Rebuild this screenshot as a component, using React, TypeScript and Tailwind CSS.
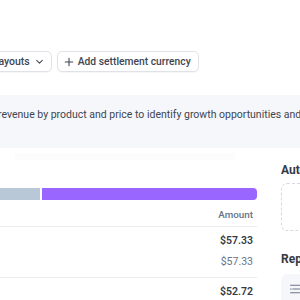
import React from 'react';

const Chevron = () => (
  <svg viewBox="0 0 16 16" className="w-[9px] h-[9px]" fill="none" stroke="currentColor" strokeWidth={1.8} strokeLinecap="round" strokeLinejoin="round">
    <path d="M3 6l5 5 5-5" />
  </svg>
);

const Plus = () => (
  <svg viewBox="0 0 16 16" className="w-[10px] h-[10px]" fill="none" stroke="currentColor" strokeWidth={1.7} strokeLinecap="round">
    <path d="M8 2v12M2 8h12" />
  </svg>
);

const ReportIcon = () => (
  <svg viewBox="0 0 16 16" className="w-[12px] h-[12px] text-[#6c7688]" fill="none" stroke="currentColor" strokeWidth={1.4} strokeLinecap="round">
    <path d="M2 3h12M5 8h9M2 13h12M2 8h1" />
  </svg>
);

export default function App() {
  return (
    <div className="w-[300px] h-[300px] overflow-hidden bg-white text-[#414552] font-['Roboto',sans-serif]">
      <div className="pt-[51px] flex gap-[5px] -ml-[44px]">
        <button className="h-[21px] pl-[10px] pr-[7px] flex items-center gap-[5px] rounded-[5px] border border-[#dfe3e8] shadow-[0_1px_1px_rgba(0,0,0,0.04)] text-[10.5px] font-medium whitespace-nowrap">
          <span>View payouts</span>
          <Chevron />
        </button>
        <button className="h-[21px] pl-[6px] pr-[7px] flex items-center gap-[4px] rounded-[5px] border border-[#dfe3e8] shadow-[0_1px_1px_rgba(0,0,0,0.04)] text-[10.3px] font-medium whitespace-nowrap">
          <Plus />
          <span>Add settlement currency</span>
        </button>
      </div>

      <div className="mt-[23px] h-[53px] bg-[#f5f7fa] pt-[11px] overflow-hidden">
        <p className="-ml-[2px] whitespace-nowrap text-[10.5px] leading-[18px] text-[#414552]">
          revenue by product and price to identify growth opportunities and optimize your pricing.
        </p>
      </div>

      <div className="flex gap-[24px] -ml-[100px]">
        <div className="w-[357px] shrink-0">
          <div className="h-[40px] pt-[5px]">
            <div className="h-[7px] ml-[115px] w-[220px] bg-[#fcfcfd]" />
          </div>
          <div className="h-[12px] flex gap-[2px]">
            <div className="w-[140px] bg-[#b9c8d6] rounded-l-[4px]" />
            <div className="flex-1 bg-[#9966ff] rounded-r-[4px]" />
          </div>
          <div className="h-[26px] pt-[4px] pr-[4px] flex items-center justify-end text-[9.8px] font-medium text-[#687385]">
            Amount
          </div>
          <div className="border-t border-[#ebeef1] h-[51px] pt-[6px] pr-[4px] text-right">
            <div className="text-[10.5px] leading-[16px] font-semibold text-[#353a44]">$57.33</div>
            <div className="mt-[5px] text-[10.5px] leading-[16px] text-[#687385]">$57.33</div>
          </div>
          <div className="border-t border-[#ebeef1] pt-[6px] pr-[4px] text-right">
            <div className="text-[10.5px] leading-[16px] font-semibold text-[#353a44]">$52.72</div>
          </div>
        </div>

        <div className="w-[200px] shrink-0">
          <h3 className="mt-[12px] h-[20px] leading-[20px] text-[12px] font-bold text-[#353a44]">Automations</h3>
          <div className="mt-[3px] h-[48px] rounded-[6px] border border-dashed border-[#d5dbe1]" />
          <h3 className="mt-[18px] h-[20px] leading-[20px] text-[12px] font-bold text-[#353a44]">Reports</h3>
          <div className="mt-[5px] h-[60px] rounded-[6px] bg-[#f5f7fa] pl-[8px] pt-[9px]">
            <ReportIcon />
          </div>
        </div>
      </div>
    </div>
  );
}
